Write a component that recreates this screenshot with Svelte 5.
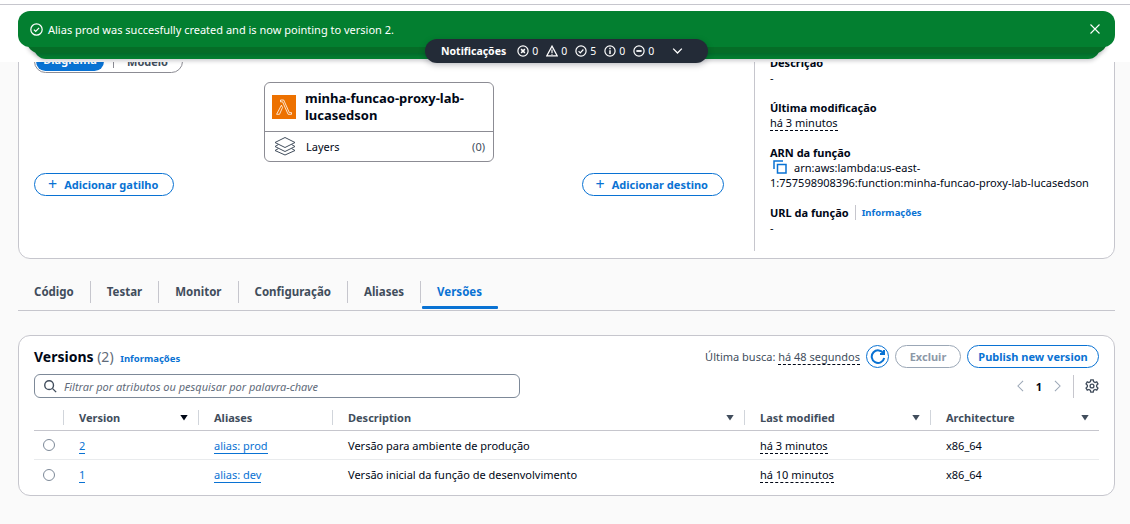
<script lang="ts">
  const rows = [
    { version: '2', alias: 'alias: prod', description: 'Versão para ambiente de produção', modified: 'há 3 minutos', arch: 'x86_64' },
    { version: '1', alias: 'alias: dev', description: 'Versão inicial da função de desenvolvimento', modified: 'há 10 minutos', arch: 'x86_64' },
  ];
  const tabs = ['Código', 'Testar', 'Monitor', 'Configuração', 'Aliases', 'Versões'];
  const counts = [
    { kind: 'error', n: 0 },
    { kind: 'warn', n: 0 },
    { kind: 'ok', n: 5 },
    { kind: 'info', n: 0 },
    { kind: 'pending', n: 0 },
  ];
</script>

<div class="page">
  <div class="top-rule"></div>

  <div class="overview-clip">
    <section class="overview">
      <div class="diagram">
        <div class="segmented">
          <span class="seg active">Diagrama</span>
          <span class="seg-sep"></span>
          <span class="seg">Modelo</span>
        </div>
        <div class="fn-box">
          <div class="fn-head">
            <span class="lambda">
              <svg viewBox="0 0 24 24" width="24" height="24" fill="none" stroke="#fff" stroke-width="0.8">
                <path d="M8.5 5h3.2l5.6 12.6h2.2v1.7h-3.4L10.6 6.8H8.5zM9.4 10.2l1.1 2.3-3 6.8H4.6z" />
              </svg>
            </span>
            <span class="fn-name">minha-funcao-proxy-lab-lucasedson</span>
          </div>
          <div class="fn-layers">
            <svg viewBox="0 0 22 20" width="22" height="20" fill="none" stroke="#414d5c" stroke-width="1">
              <path d="M11 1.5 21 6.5 11 11.5 1 6.5zM4.5 8.5 1 10.5 11 15.5 21 10.5 17.5 8.5M4.5 12.5 1 14.5 11 19 21 14.5 17.5 12.5" />
            </svg>
            <span class="layers-label">Layers</span>
            <span class="layers-count">(0)</span>
          </div>
        </div>
        <div class="add-row">
          <button class="btn"><span class="plus">+</span>Adicionar gatilho</button>
          <button class="btn"><span class="plus">+</span>Adicionar destino</button>
        </div>
      </div>

      <aside class="details">
        <div class="field">
          <div class="label">Descrição</div>
          <div class="value">-</div>
        </div>
        <div class="field">
          <div class="label">Última modificação</div>
          <div class="value"><span class="dotted">há 3 minutos</span></div>
        </div>
        <div class="field">
          <div class="label">ARN da função</div>
          <div class="value arn">
            <svg class="copy" viewBox="0 0 14 14" width="14" height="14" fill="none" stroke="#0972d3" stroke-width="1.5">
              <path d="M1 9V1h9M4.5 4.5h8.5v8.500H4.5z" />
            </svg>arn:aws:lambda:us-east-1:757598908396:function:minha-funcao-proxy-lab-lucasedson
          </div>
        </div>
        <div class="field">
          <div class="label">URL da função<span class="info-sep"></span><a class="info" href="#top">Informações</a></div>
          <div class="value">-</div>
        </div>
      </aside>
    </section>
  </div>

  <nav class="tabs">
    {#each tabs as tab, i}
      <span class="tab" class:active={tab === 'Versões'} class:first={i === 0}>{tab}</span>
    {/each}
  </nav>

  <section class="versions">
    <header class="versions-head">
      <h2>Versions <span class="count">(2)</span> <a class="info" href="#top">Informações</a></h2>
      <div class="actions">
        <span class="fetched">Última busca: <span class="dotted">há 48 segundos</span></span>
        <button class="refresh" aria-label="Atualizar">
          <svg viewBox="0 0 16 16" width="16" height="16" fill="none" stroke="#0972d3" stroke-width="2">
            <path d="M13.500 4.500A6.300 6.300 0 1 0 14.200 9M14 1v4h-4" />
          </svg>
        </button>
        <button class="btn disabled">Excluir</button>
        <button class="btn publish">Publish new version</button>
      </div>
    </header>

    <div class="tools">
      <div class="search">
        <svg viewBox="0 0 16 16" width="14" height="14" fill="none" stroke="#414d5c" stroke-width="1.6">
          <circle cx="7" cy="7" r="5" /><path d="m11 11 4 4" />
        </svg>
        <span>Filtrar por atributos ou pesquisar por palavra-chave</span>
      </div>
      <div class="pager">
        <svg viewBox="0 0 10 14" width="9" height="12" fill="none" stroke="#9ba7b6" stroke-width="1.2"><path d="M8 1 2 7l6 6" /></svg>
        <b>1</b>
        <svg viewBox="0 0 10 14" width="9" height="12" fill="none" stroke="#9ba7b6" stroke-width="1.2"><path d="m2 1 6 6-6 6" /></svg>
        <span class="pager-sep"></span>
        <svg viewBox="0 0 16 16" width="14" height="14" fill="none" stroke="#414d5c" stroke-width="1.500">
          <circle cx="8" cy="8" r="2.200" />
          <path d="M6.600 1h2.800l.4 2 1.700 1 1.900-.7 1.400 2.400-1.500 1.400v1.800l1.500 1.400-1.400 2.400-1.900-.7-1.700 1-.4 2H6.600l-.4-2-1.700-1-1.900.7-1.400-2.400 1.500-1.400V7.100L1.200 5.700l1.400-2.400 1.900.7 1.700-1z" />
        </svg>
      </div>
    </div>

    <div class="table">
      <div class="row head">
        <div class="cell radio-cell"></div>
        <div class="cell sep">Version<span class="sort solid"></span></div>
        <div class="cell sep">Aliases</div>
        <div class="cell sep">Description<span class="sort"></span></div>
        <div class="cell sep">Last modified<span class="sort"></span></div>
        <div class="cell sep last">Architecture<span class="sort"></span></div>
      </div>
      {#each rows as row}
        <div class="row">
          <div class="cell radio-cell"><span class="radio"></span></div>
          <div class="cell"><a href="#top">{row.version}</a></div>
          <div class="cell"><a href="#top">{row.alias}</a></div>
          <div class="cell">{row.description}</div>
          <div class="cell"><span class="dotted">{row.modified}</span></div>
          <div class="cell">{row.arch}</div>
        </div>
      {/each}
    </div>
  </section>

  <div class="flash-wrap">
    <div class="flash-layer third"></div>
    <div class="flash-layer second"></div>
    <div class="flash">
      <svg viewBox="0 0 16 16" width="13" height="13" fill="none" stroke="#fff" stroke-width="1.500">
        <circle cx="8" cy="8" r="7" /><path d="m4.800 8.200 2.200 2.200 4.200-4.400" />
      </svg>
      <span class="flash-text">Alias prod was succesfully created and is now pointing to version 2.</span>
      <svg class="close" viewBox="0 0 16 16" width="12" height="12" fill="none" stroke="#fff" stroke-width="1.500">
        <path d="m2 2 12 12M14 2 2 14" />
      </svg>
    </div>
    <div class="notif">
      <b>Notificações</b>
      {#each counts as c}
        <span class="count-item">
          <svg viewBox="0 0 16 16" width="12" height="12" fill="none" stroke="#fff" stroke-width="1.600">
            {#if c.kind === 'warn'}
              <path d="M8 1.500 15 14.500H1zM8 6v4.500M8 11.500v1.500" />
            {:else}
              <circle cx="8" cy="8" r="6.800" />
              {#if c.kind === 'error'}
                <path d="m5.500 5.500 5 5M10.500 5.500l-5 5" stroke-width="2" />
              {:else if c.kind === 'ok'}
                <path d="m4.800 8.200 2.200 2.200 4.200-4.400" />
              {:else if c.kind === 'info'}
                <path d="M8 7v5M8 3.800v1.700" stroke-width="2" />
              {:else}
                <path d="M4.500 8h7" stroke-width="2.400" />
              {/if}
            {/if}
          </svg>{c.n}
        </span>
      {/each}
      <svg class="chev" viewBox="0 0 14 10" width="11" height="8" fill="none" stroke="#fff" stroke-width="1.700">
        <path d="m1.500 2 5.500 5.500L12.500 2" />
      </svg>
    </div>
  </div>
</div>

<style>
  :global(body) {
    margin: 0;
    background: #fafafa;
  }

  .page {
    position: relative;
    width: 1130px;
    height: 524px;
    overflow: hidden;
    font-family: 'Noto Sans', sans-serif;
    font-size: 11px;
    font-stretch: 90%;
    line-height: 15px;
    color: #000716;
    background: #fafafa;
  }

  .top-rule {
    height: 4px;
    background: #fff;
    border-bottom: 1px solid #c6c6cd;
  }

  a {
    color: #0972d3;
    text-decoration: none;
  }

  .dotted {
    border-bottom: 1px dashed #000716;
  }

  .overview-clip {
    height: 254px;
    margin-left: 18px;
    margin-right: 15px;
    overflow: hidden;
  }

  .overview {
    display: flex;
    height: 254px;
    background: #fff;
    border: 1px solid #c6c6cd;
    border-radius: 12px;
    box-sizing: border-box;
  }

  .diagram {
    width: 735px;
    flex-shrink: 0;
    box-sizing: border-box;
    padding: 44px 30px 0 15px;
  }

  .segmented {
    display: flex;
    align-items: center;
    width: 149px;
    height: 23px;
    box-sizing: border-box;
    border: 1px solid #8c8c94;
    border-radius: 12px;
    padding: 1px;
    color: #414d5c;
    font-weight: 700;
  }

  .seg {
    flex: 1;
    text-align: center;
  }

  .seg.active {
    flex: none;
    width: 68px;
    height: 100%;
    background: #0972d3;
    color: #fff;
    border-radius: 10px;
  }

  .seg-sep {
    width: 1px;
    height: 12px;
    margin-left: 9px;
    background: #8c8c94;
  }

  .fn-box {
    width: 230px;
    height: 80px;
    margin: 9px 0 0 230px;
    box-sizing: border-box;
    border: 1px solid #8c8c94;
    border-radius: 6px;
  }

  .fn-head {
    display: flex;
    align-items: center;
    gap: 9px;
    height: 48px;
    padding-left: 7px;
    border-bottom: 1px solid #8c8c94;
  }

  .lambda {
    flex-shrink: 0;
    width: 24px;
    height: 24px;
    background: #ed7100;
  }

  .lambda svg {
    display: block;
  }

  .fn-name {
    width: 175px;
    font-size: 13px;
    line-height: 17px;
    font-weight: 700;
    overflow-wrap: anywhere;
  }

  .fn-layers {
    display: flex;
    align-items: center;
    height: 28px;
    padding: 0 8px 0 9px;
    color: #414d5c;
  }

  .layers-label {
    margin-left: 10px;
    color: #000716;
  }

  .layers-count {
    margin-left: auto;
  }

  .add-row {
    display: flex;
    justify-content: space-between;
    margin-top: 11px;
  }

  .btn {
    height: 23px;
    padding: 0 16px;
    box-sizing: border-box;
    background: #fff;
    border: 1px solid #0972d3;
    border-radius: 12px;
    color: #0972d3;
    font: 700 11px/15px 'Noto Sans', sans-serif;
    font-stretch: 90%;
  }

  .add-row .btn {
    padding: 0 15px 0 13px;
  }

  .plus {
    font-size: 16px;
    font-weight: 400;
    margin-right: 7px;
    vertical-align: -1px;
  }

  .details {
    flex: 1;
    margin-bottom: 7px;
    padding: 49px 0 0 15px;
    border-left: 1px solid #c6c6cd;
  }

  .field {
    margin-bottom: 15px;
  }

  .label {
    display: flex;
    align-items: center;
    font-weight: 700;
  }

  .info-sep {
    width: 1px;
    height: 15px;
    margin: 0 6px;
    background: #c6c6cd;
  }

  .info {
    font-size: 9.500px;
    font-weight: 700;
  }

  .value {
    min-height: 15px;
  }

  .arn {
    width: 320px;
    overflow-wrap: anywhere;
  }

  .copy {
    margin: 0 7px 0 3px;
    vertical-align: -2px;
  }

  .tabs {
    display: flex;
    align-items: stretch;
    height: 29px;
    margin: 22px 15px 0 18px;
    border-bottom: 1px solid #c6c6cd;
    box-sizing: content-box;
  }

  .tab {
    position: relative;
    height: 22px;
    line-height: 22px;
    padding: 0 16px;
    border-left: 1px solid #c6c6cd;
    font-weight: 700;
    font-size: 11.500px;
    color: #414d5c;
  }

  .tab.first {
    border-left: 0;
  }

  .tab.active {
    color: #0972d3;
  }

  .tab.active::after {
    content: '';
    position: absolute;
    left: 1px;
    right: 0;
    bottom: -6px;
    height: 3px;
    background: #0972d3;
    border-radius: 1px;
  }

  .versions {
    height: 161px;
    box-sizing: border-box;
    margin: 24px 15px 0 18px;
    padding: 9px 15px 0;
    background: #fff;
    border: 1px solid #c6c6cd;
    border-radius: 12px;
  }

  .versions-head {
    display: flex;
    justify-content: space-between;
    align-items: center;
    height: 23px;
  }

  h2 {
    margin: 2px 0 0;
    font-size: 14px;
    font-weight: 700;
    line-height: 20px;
  }

  .count {
    font-weight: 400;
    color: #5f6b7a;
  }

  h2 .info {
    margin-left: 3px;
  }

  .actions {
    display: flex;
    align-items: center;
    gap: 6px;
  }

  .fetched {
    color: #414d5c;
  }

  .refresh {
    display: flex;
    align-items: center;
    justify-content: center;
    width: 23px;
    height: 23px;
    padding: 0;
    background: #fff;
    border: 1px solid #0972d3;
    border-radius: 50%;
  }

  .btn.disabled {
    width: 66px;
    padding: 0;
    border-color: #9ba7b6;
    color: #8d99a8;
  }

  .btn.publish {
    width: 132px;
    padding: 0;
  }

  .tools {
    display: flex;
    justify-content: space-between;
    align-items: center;
    height: 24px;
    margin-top: 6px;
  }

  .search {
    display: flex;
    align-items: center;
    gap: 7px;
    width: 486px;
    height: 24px;
    box-sizing: border-box;
    padding-left: 8px;
    border: 1px solid #7d8998;
    border-radius: 6px;
    font-style: italic;
    color: #5f6b7a;
  }

  .pager {
    display: flex;
    align-items: center;
    gap: 11px;
    color: #414d5c;
  }

  .pager b {
    color: #000716;
  }

  .pager-sep {
    width: 1px;
    height: 23px;
    background: #c6c6cd;
  }

  .table {
    margin-top: 6px;
  }

  .row {
    display: grid;
    grid-template-columns: 29px 135px 134px 412px 186px 169px;
    height: 29px;
    align-items: center;
    border-bottom: 1px solid #e9ebed;
    box-sizing: border-box;
  }

  .row:last-child {
    border-bottom: 0;
  }

  .row.head {
    height: 27px;
    border-bottom: 1px solid #c6c6cd;
    font-weight: 700;
    color: #414d5c;
  }

  .cell {
    position: relative;
    padding-left: 16px;
  }

  .cell a {
    border-bottom: 1px solid #0972d3;
  }

  .radio-cell {
    padding-left: 9px;
    height: 12px;
  }

  .radio {
    display: block;
    width: 12px;
    height: 12px;
    box-sizing: border-box;
    border: 1px solid #7d8998;
    border-radius: 50%;
  }

  .head .sep::before {
    content: '';
    position: absolute;
    left: 0;
    top: 0;
    bottom: 0;
    width: 1px;
    background: #d1d5db;
  }

  .sort {
    position: absolute;
    right: 10px;
    top: 5px;
    width: 8px;
    height: 6px;
    background: #414d5c;
    clip-path: polygon(0 0, 100% 0, 50% 100%);
  }

  .sort.solid {
    background: #000716;
  }

  .flash-wrap {
    position: absolute;
    left: 0;
    top: 5px;
    width: 1130px;
    height: 57px;
    background: #fff;
  }

  .flash {
    position: absolute;
    left: 18px;
    top: 6px;
    width: 1097px;
    height: 36px;
    display: flex;
    align-items: center;
    gap: 5px;
    box-sizing: border-box;
    padding: 0 14px 0 12px;
    background: #037f30;
    border-radius: 12px;
    color: #fff;
  }

  .close {
    margin-left: auto;
  }

  .flash-layer {
    position: absolute;
    height: 20px;
    border-radius: 0 0 12px 12px;
    box-shadow: 0 2px 4px rgba(0, 7, 22, 0.2);
  }

  .flash-layer.second {
    left: 27px;
    width: 1080px;
    top: 28px;
    background: #056d27;
  }

  .flash-layer.third {
    left: 34px;
    width: 1066px;
    top: 34px;
    background: #037f30;
  }

  .notif {
    position: absolute;
    left: 425px;
    top: 34px;
    width: 283px;
    height: 24px;
    display: flex;
    align-items: center;
    box-sizing: border-box;
    padding-left: 16px;
    background: #232b37;
    border-radius: 12px;
    color: #fff;
    box-shadow: 0 2px 6px rgba(0, 7, 22, 0.25);
  }

  .notif b {
    margin-right: 11px;
    font-size: 10.500px;
  }

  .count-item {
    display: flex;
    align-items: center;
    gap: 3px;
    margin-right: 8px;
    font-size: 10.500px;
  }

  .chev {
    margin-left: 10px;
  }
</style>
